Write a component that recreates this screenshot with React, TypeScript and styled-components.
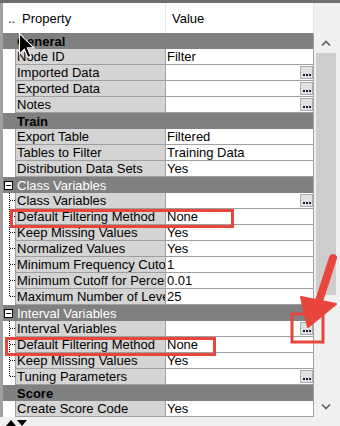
import React from "react";
import styled, { createGlobalStyle } from "styled-components";

type Item =
  | { kind: "section"; label: string; toggle?: boolean }
  | { kind: "prop"; label: string; value?: string; button?: boolean; tree?: "mid" | "last" };

const items: Item[] = [
  { kind: "section", label: "General" },
  { kind: "prop", label: "Node ID", value: "Filter" },
  { kind: "prop", label: "Imported Data", button: true },
  { kind: "prop", label: "Exported Data", button: true },
  { kind: "prop", label: "Notes", button: true },
  { kind: "section", label: "Train" },
  { kind: "prop", label: "Export Table", value: "Filtered" },
  { kind: "prop", label: "Tables to Filter", value: "Training Data" },
  { kind: "prop", label: "Distribution Data Sets", value: "Yes" },
  { kind: "section", label: "Class Variables", toggle: true },
  { kind: "prop", label: "Class Variables", button: true, tree: "mid" },
  { kind: "prop", label: "Default Filtering Method", value: "None", tree: "mid" },
  { kind: "prop", label: "Keep Missing Values", value: "Yes", tree: "mid" },
  { kind: "prop", label: "Normalized Values", value: "Yes", tree: "mid" },
  { kind: "prop", label: "Minimum Frequency Cutoff", value: "1", tree: "mid" },
  { kind: "prop", label: "Minimum Cutoff for Percentage", value: "0.01", tree: "mid" },
  { kind: "prop", label: "Maximum Number of Levels", value: "25", tree: "last" },
  { kind: "section", label: "Interval Variables", toggle: true },
  { kind: "prop", label: "Interval Variables", button: true, tree: "mid" },
  { kind: "prop", label: "Default Filtering Method", value: "None", tree: "mid" },
  { kind: "prop", label: "Keep Missing Values", value: "Yes", tree: "mid" },
  { kind: "prop", label: "Tuning Parameters", button: true, tree: "last" },
  { kind: "section", label: "Score" },
  { kind: "prop", label: "Create Score Code", value: "Yes" },
];

const GlobalStyle = createGlobalStyle`
  html, body { margin: 0; padding: 0; background: #f0f0f0; }
`;

const TreeLine: React.FC<{ kind: "mid" | "last" }> = ({ kind }) => (
  <svg width="12" height="16" style={{ display: "block" }}>
    <line x1="6.5" y1="0" x2="6.5" y2={kind === "mid" ? 16 : 8} stroke="#000" strokeDasharray="1 1" />
    <line x1="7" y1="7.5" x2="12" y2="7.5" stroke="#000" strokeDasharray="1 1" />
  </svg>
);

export default function App() {
  return (
    <Frame>
      <GlobalStyle />
      <TopEdge />
      <Header>
        <HeadProperty>
          <HeadDots>..</HeadDots>
          <span>Property</span>
        </HeadProperty>
        <HeadValue>Value</HeadValue>
        <HeadFill />
      </Header>
      <Body>
        <Grid>
          {items.map((it, i) =>
            it.kind === "section" ? (
              <SectionRow key={i} $toggle={!!it.toggle}>
                <Toggle>{it.toggle && <MinusBox />}</Toggle>
                {it.label}
              </SectionRow>
            ) : (
              <PropRow key={i}>
                <Gutter>{it.tree && <TreeLine kind={it.tree} />}</Gutter>
                <NameCell>{it.label}</NameCell>
                <ValueCell>
                  <span>{it.value}</span>
                  {it.button && (
                    <DotButton>
                      <Dot />
                      <Dot />
                      <Dot />
                    </DotButton>
                  )}
                </ValueCell>
              </PropRow>
            )
          )}
        </Grid>
        <ScrollBar>
          <ArrowBtn>
            <svg width="10" height="6">
              <polyline points="1,5.5 5,1.5 9,5.5" fill="none" stroke="#606060" strokeWidth="1.6" />
            </svg>
          </ArrowBtn>
          <Track>
            <Thumb />
          </Track>
          <ArrowBtn>
            <svg width="10" height="6">
              <polyline points="1,0.5 5,4.5 9,0.5" fill="none" stroke="#606060" strokeWidth="1.6" />
            </svg>
          </ArrowBtn>
        </ScrollBar>
      </Body>
      <BottomBar>
        <svg width="24" height="9">
          <polygon points="1,9 6,3 11,9" fill="#000" />
          <polygon points="12,3 22,3 17,9" fill="#000" />
        </svg>
      </BottomBar>
      <Overlay width="340" height="426">
        <rect x="11.5" y="210.5" width="221" height="16" fill="none" stroke="#e8453c" strokeWidth="3" />
        <rect x="6.5" y="338.5" width="208" height="16" fill="none" stroke="#e8453c" strokeWidth="3" />
        <rect x="292" y="314" width="31" height="28" fill="none" stroke="#e8453c" strokeWidth="3" />
        <line x1="333" y1="258" x2="319" y2="301" stroke="#e8453c" strokeWidth="8" strokeLinecap="round" />
        <polygon points="301,297 336,304 308,327" fill="#e8453c" strokeLinejoin="round" stroke="#e8453c" strokeWidth="2" />
        <polygon
          points="0,0 0,17 4,13 7,20 9.5,19 6.5,12 12,12"
          transform="translate(19.5,33.5) scale(1.2)"
          fill="#000"
          stroke="#fff"
          strokeWidth="0.9"
        />
      </Overlay>
    </Frame>
  );
}

const Frame = styled.div`
  position: relative;
  width: 340px;
  height: 426px;
  background: #f0f0f0;
  display: flex;
  flex-direction: column;
  overflow: hidden;
  font-family: "Liberation Sans", Arial, sans-serif;
  font-size: 13px;
  color: #000;
`;

const TopEdge = styled.div`
  height: 3px;
  background: #6e6e6e;
  flex-shrink: 0;
`;

const Header = styled.div`
  height: 30px;
  display: grid;
  grid-template-columns: 162px 148px 1fr;
  border-left: 3px solid #a0a0a0;
  background: #fff;
`;

const HeadProperty = styled.div`
  display: flex;
  align-items: center;
  padding-left: 5px;
`;

const HeadDots = styled.span`
  width: 14px;
`;

const HeadValue = styled.div`
  display: flex;
  align-items: center;
  padding-left: 6px;
  border-left: 1px solid #e5e5e5;
`;

const HeadFill = styled.div`
  background: #f0f0f0;
  border-left: 1px solid #e5e5e5;
`;

const Body = styled.div`
  height: 384px;
  display: flex;
  border-left: 3px solid #a0a0a0;
`;

const Grid = styled.div`
  width: 310px;
  border-right: 1px solid #a0a0a0;
  display: flex;
  flex-direction: column;
`;

const SectionRow = styled.div<{ $toggle: boolean }>`
  height: 16px;
  display: flex;
  align-items: center;
  background: #808080;
  color: ${(p) => (p.$toggle ? "#fff" : "#000")};
  font-weight: ${(p) => (p.$toggle ? "normal" : "bold")};
  white-space: nowrap;
`;

const Toggle = styled.div`
  width: 13px;
  padding-left: 1px;
  display: flex;
  align-items: center;
`;

const MinusBox = styled.div`
  position: relative;
  width: 7px;
  height: 7px;
  border: 1px solid #000;
  background: #fff;
  &::after {
    content: "";
    position: absolute;
    left: 1px;
    right: 1px;
    top: 3px;
    height: 1px;
    background: #000;
  }
`;

const PropRow = styled.div`
  height: 16px;
  display: grid;
  grid-template-columns: 12px 150px 148px;
`;

const Gutter = styled.div`
  background: #fff;
`;

const NameCell = styled.div`
  background: #d4d4d4;
  border-left: 1px solid #a0a0a0;
  border-bottom: 1px solid #a0a0a0;
  padding-left: 1px;
  line-height: 15px;
  white-space: nowrap;
  overflow: hidden;
`;

const ValueCell = styled.div`
  background: #fff;
  border-left: 1px solid #a0a0a0;
  border-bottom: 1px solid #a0a0a0;
  padding-left: 1px;
  line-height: 15px;
  display: flex;
  justify-content: space-between;
  white-space: nowrap;
  overflow: hidden;
`;

const DotButton = styled.div`
  box-sizing: border-box;
  width: 13px;
  height: 13px;
  margin-top: 1px;
  background: #e1e1e1;
  border: 1px solid #adadad;
  display: flex;
  align-items: flex-end;
  justify-content: center;
  gap: 1px;
  padding-bottom: 2px;
`;

const Dot = styled.span`
  width: 2px;
  height: 2px;
  background: #1a1a3a;
`;

const ScrollBar = styled.div`
  width: 26px;
  display: flex;
  flex-direction: column;
  background: #f0f0f0;
`;

const ArrowBtn = styled.div`
  height: 20px;
  display: flex;
  align-items: center;
  justify-content: center;
  padding-right: 2px;
`;

const Track = styled.div`
  flex: 1;
  padding: 0 4px 0 2px;
`;

const Thumb = styled.div`
  height: 242px;
  background: #cdcdcd;
`;

const BottomBar = styled.div`
  flex: 1;
  background: #f0f0f0;
  padding-left: 5px;
  display: flex;
  align-items: flex-end;
`;

const Overlay = styled.svg`
  position: absolute;
  left: 0;
  top: 0;
  pointer-events: none;
`;
